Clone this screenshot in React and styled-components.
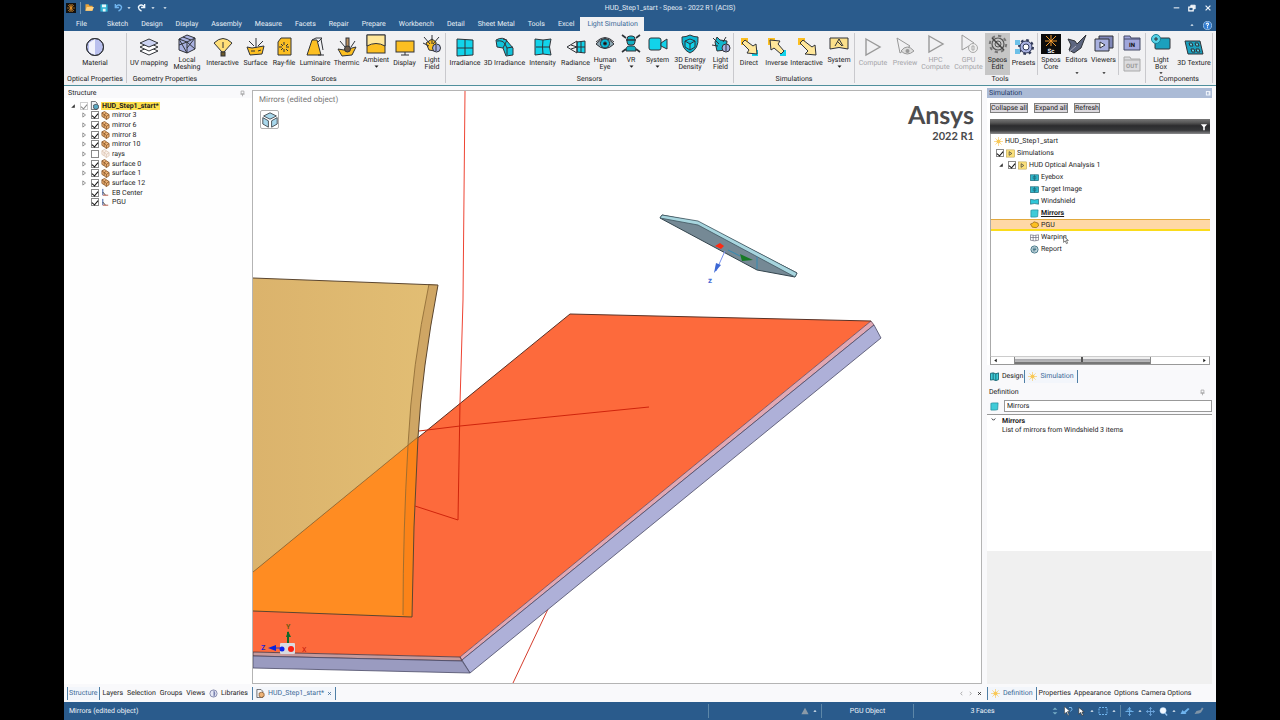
import { Fragment, useState } from 'react'
import styled, { createGlobalStyle, css } from 'styled-components'


const GlobalStyle = createGlobalStyle`
    :root {
        --blue: #2a5b8c;
        --ribbon: #f1f1f3;
        --line: #c9c9cd;
        --steel: #4f7fa6;
    }
    * { box-sizing: border-box; }
    body {
        margin: 0;
        background: #000;
    }
    button, input {
        font: inherit;
        color: inherit;
        text-rendering: inherit;
    }
    ul { list-style: none; margin: 0; padding: 0; }
    svg { display: block; flex: none; }
`

const Page = styled.div`
    min-height: 100vh;
    margin: 0 64px;
    display: flex;
    flex-direction: column;
    background: #f9f9fb;
    color: #1c1c1c;
    font: 7px/8px Roboto, "Liberation Sans", sans-serif;
    text-rendering: geometricPrecision;
    white-space: nowrap;
`

const Spacer = styled.div`
    flex: 1;
`

/* ---------- title bar and menu ---------- */

const TitleBar = styled.header`
    display: grid;
    grid-template-columns: 1fr auto 1fr;
    align-items: center;
    height: 15px;
    padding: 0 4px 0 2px;
    background: var(--blue);
    color: #e4ecf4;
`

const Title = styled.h1`
    margin: 0;
    padding-left: 62px;
    font-size: 7px;
    font-weight: 400;
`

const Tools = styled.div`
    display: flex;
    align-items: center;
    gap: ${p => p.$gap || 4}px;
    justify-content: ${p => (p.$end ? 'flex-end' : 'flex-start')};
    height: 12px;
    color: #eef4fa;
`

const ToolButton = styled.button`
    display: flex;
    align-items: center;
    justify-content: center;
    border: none;
    background: none;
    padding: 0;
    min-width: ${p => p.$w || 6}px;
`

const Menu = styled.nav`
    display: flex;
    align-items: flex-end;
    height: 16px;
    padding: 0 4px 0 5px;
    background: var(--blue);
`

const MenuItem = styled.button`
    height: 14px;
    padding: 0 6px 0 7px;
    border: none;
    background: ${p => (p.$active ? 'var(--ribbon)' : 'none')};
    color: ${p => (p.$active ? '#3a6a98' : '#e9f0f7')};
    &:first-child {
        margin-right: 7px;
    }
`

/* ---------- ribbon ---------- */

const Ribbon = styled.div`
    display: flex;
    height: 55px;
    padding-top: 2px;
    background: var(--ribbon);
    border-bottom: 1px solid #4f8f9c;
    overflow: hidden;
`

const Group = styled.section`
    display: flex;
    flex-direction: column;
    flex: none;
    height: 50px;
    border-right: ${p => (p.$open ? 'none' : '1px solid var(--line)')};
`

const GroupRow = styled.div`
    display: flex;
    height: 42px;
`

const GroupName = styled.div`
    text-align: center;
    line-height: 8px;
`

const RibbonButton = styled.button`
    display: flex;
    flex-direction: column;
    align-items: center;
    width: ${p => p.$w}px;
    height: 42px;
    padding: ${p => (p.$tall ? 1 : 4)}px 0 0;
    border: none;
    background: ${p => (p.$on ? '#c6c6c6' : 'none')};
    color: ${p => (p.$off ? '#a4a4a8' : 'inherit')};
    line-height: 7px;
    span {
        margin-top: 3px;
    }
`

const Stack = styled.div`
    display: flex;
    flex-direction: column;
    align-items: center;
    gap: 4px;
    width: 26px;
    padding-top: 1px;
`

const Divider = styled.div`
    width: 1px;
    align-self: stretch;
    background: ${p => p.$tone || 'var(--line)'};
`

/* ---------- work area ---------- */

const Work = styled.main`
    flex: 1;
    display: flex;
    padding-top: 2px;
`

const Side = styled.aside`
    display: flex;
    flex-direction: column;
    flex: none;
    width: ${p => p.$w}px;
    ${p => p.$right && css`
        padding: 0 4px 0 5px;
    `}
`

const PanelTitle = styled.h2`
    display: flex;
    align-items: center;
    justify-content: space-between;
    height: 10px;
    margin: 0 ${p => (p.$lit ? 0 : 2)}px 0 0;
    padding: 0 ${p => (p.$lit ? 0 : 4)}px 0 ${p => (p.$right ? 2 : 4)}px;
    font-size: 7px;
    font-weight: 400;
    color: ${p => (p.$lit ? '#1f3a66' : 'inherit')};
    background: ${p => (p.$lit ? '#abbbd6' : 'none')};
`

const StructureBody = styled.div`
    flex: 1;
    padding: 3px 0 0 6px;
    background: #fefefe;
`

const StructureTree = styled.ul`
    display: grid;
    grid-auto-rows: 1fr;
    height: 106px;
`

const Node = styled.li`
    display: flex;
    align-items: center;
    gap: 2px;
    padding-left: ${p => p.$indent}px;
    label {
        display: flex;
        align-items: center;
        gap: 2px;
    }
    b {
        display: block;
        padding: 0 1px;
        background: #ffe14d;
        line-height: 8px;
    }
`

const Twist = styled.button`
    display: flex;
    width: 8px;
    padding: 0;
    border: none;
    background: none;
`

const Tick = styled.input`
    appearance: none;
    display: flex;
    justify-content: center;
    width: 8px;
    height: 8px;
    margin: 0;
    border: 1px solid ${p => (p.$faint ? '#d0d0d0' : '#8a8a8a')};
    background: #fff;
    &:checked::before {
        content: "";
        width: 3px;
        height: 5px;
        border: solid ${p => (p.$faint ? '#888' : '#111')};
        border-width: 0 1px 1px 0;
        transform: rotate(40deg);
    }
`

const TabStrip = styled.nav`
    display: flex;
    align-items: center;
    gap: ${p => p.$gap || 0}px;
    height: ${p => p.$h || 18}px;
    padding: 1px 0 1px ${p => p.$pad || 0}px;
`

const Tab = styled.button`
    display: flex;
    align-items: center;
    gap: 3px;
    height: 13px;
    padding: 0 ${p => (p.$wide ? 3 : 1)}px;
    border: none;
    background: none;
    ${p => p.$on && css`
        color: #3c6a98;
        border: solid var(--steel);
        border-width: 0 1px;
        background: #f3f6fb;
    `}
`

const Centre = styled.section`
    flex: 1;
    min-width: 0;
    display: flex;
    flex-direction: column;
    padding-top: 2px;
`

const Viewport = styled.div`
    position: relative;
    flex: 1;
    border: 1px solid #b4b4b4;
    background: #fff;
    overflow: hidden;
`

const Scene = styled.svg`
    position: absolute;
    inset: 0;
    width: 100%;
    height: 100%;
`

const ViewLabel = styled.div`
    position: absolute;
    top: 4px;
    left: 6px;
    color: #777;
    font-size: 8px;
    line-height: 9px;
`

const ViewButton = styled.button`
    position: absolute;
    top: 19px;
    left: 7px;
    display: flex;
    width: 19px;
    height: 19px;
    padding: 1px;
    align-items: center;
    justify-content: center;
    background: #fff;
    border: 1px solid #b0b0b0;
    border-radius: 2px;
`

const Brand = styled.div`
    position: absolute;
    top: 9px;
    right: 7px;
    text-align: right;
    color: #4b4b4d;
    font: 700 25px/30px Lato, sans-serif;
    small {
        display: block;
        font-size: 11px;
        line-height: 13px;
    }
`

/* ---------- simulation and definition ---------- */

const SimPanel = styled.div`
    display: flex;
    flex-direction: column;
    height: 267px;
    margin-right: 2px;
    padding-left: 3px;
    background: #fff;
`

const Actions = styled.div`
    display: flex;
    gap: 6px;
    padding: 5px 0 6px;
    button {
        height: 10px;
        padding: 0;
        border: 1px solid #808080;
        background: #dcd9de;
        line-height: 8px;
    }
`

const FilterBar = styled.div`
    display: flex;
    align-items: center;
    justify-content: flex-end;
    height: 15px;
    padding-right: 2px;
    background: linear-gradient(#777 0, #555 25%, #2c2c2e 45%, #37383a 75%, #8b8b8d 100%);
`

const SimTree = styled.ul`
    flex: 1;
    border-left: 1px solid #aaa;
    padding-top: 1px;
`

const SimNode = styled(Node)`
    height: 12px;
    ${p => p.$hot && css`
        background: #ffd8a6;
        border-top: 1px solid #e2a93d;
        border-bottom: 2px solid #fbdc1c;
    `}
    u { font-weight: 700; }
`

const ScrollTrack = styled.div`
    display: flex;
    align-items: center;
    height: 9px;
    padding: 0 2px;
    border: 1px solid #999;
    border-top-color: #ccc;
`

const Thumb = styled.div`
    display: flex;
    justify-content: center;
    width: 64%;
    height: 7px;
    margin: 0 auto 0 16px;
    border: 1px solid #888;
    border-width: 0 1px;
    background: linear-gradient(#eee 30%, #a9a9ad 30%, #bbb 75%, #777 76%);
    &::before {
        content: "";
        width: 2px;
        height: 5px;
        background: #555;
    }
`

const NameRow = styled.label`
    display: flex;
    align-items: center;
    gap: 5px;
    height: 17px;
    padding: 1px 0 0 3px;
`

const NameInput = styled.input`
    flex: 1;
    min-width: 0;
    height: 12px;
    padding: 0 2px;
    border: 1px solid #999;
    background: #fff;
`

const Details = styled.div`
    height: 137px;
    padding: 2px 0 0 4px;
    border-top: 1px solid #999;
    background: #fff;
    display: grid;
    grid-template-columns: 11px 1fr;
    grid-auto-rows: 9px;
    align-content: start;
    p, h3 {
        margin: 0;
        grid-column: 2;
        font-size: 7px;
    }
    h3 { line-height: 8px; }
`

const Blank = styled.div`
    flex: 1;
    background: #f0f0f0;
`

const Pointer = styled.svg`
    position: absolute;
    top: 2px;
    right: -3px;
`

const Hovered = styled.span`
    position: relative;
`

/* ---------- status bar ---------- */

const Status = styled.footer`
    display: flex;
    align-items: center;
    height: 18px;
    padding: 0 12px 0 5px;
    background: var(--blue);
    color: #eef4fa;
`

const StatusCell = styled.div`
    display: flex;
    align-items: center;
    justify-content: ${p => (p.$end ? 'flex-end' : 'center')};
    gap: 4px;
    width: ${p => p.$w}px;
    height: 14px;
    padding-right: ${p => (p.$end ? 4 : 0)}px;
    border-left: 1px solid #5d87a8;
`

/* ---------- drawings ---------- */

const art = {
    material: <><circle cx="10" cy="10" r="8.5" fill="#b9c0ee" /><path d="M4 15V6l6-4v16z" fill="#fff" stroke="none" opacity=".8" /><circle cx="10" cy="10" r="8.5" fill="none" /></>,
    uv: <><path d="M1 14l9-4 9 4-9 4z" fill="#fff" /><path d="M1 10l9-4 9 4-9 4z" fill="#fff" /><path d="M1 6l9-4 9 4-9 4z" fill="#ccd3f2" /></>,
    mesh: <><path d="M2 5l8-4 8 3v11l-8 4-8-3z" fill="#a9b1e0" /><path d="M2 5l8 3 8-4M10 8v11M2 5l8 14M10 8l8 7M2 11l8-3M10 14l8-10M6 3l8 3" fill="none" /></>,
    interactive: <><path d="M1 6q9-9 18 0l-8 9H9z" fill="#ffdf78" /><path d="M10 5v6" /><rect x="8" y="15" width="4" height="4" fill="#6d5a2b" /></>,
    surface: <><path d="M1 10l5 1 12-2-2 8-12 1z" fill="#fcbf22" /><path d="M3 4l5 5M10 1v10M17 4l-5 5M5 14h4M12 14l3-1" /></>,
    rayfile: <><path d="M7 1h10v17H4V5z" fill="#fcbf22" /><path d="M10 5v3M10 12v3M5 10h3M12 10h3M7 7l2 2M12 12l2 2M14 7l-2 2M7 13l2-2" /></>,
    luminaire: <><path d="M7 3h5l4 15H2z" fill="#fcbf22" /><path d="M7 3l4-2h6l-4 4M16 2l2 11M13 18h6" fill="none" /></>,
    thermic: <><path d="M1 12l6 1 12-3-4 8-10 1z" fill="#fcbf22" /><path d="M3 4l5 6M18 4l-4 6" /><rect x="9" y="1" width="3" height="11" fill="#b98f5f" /><circle cx="10.5" cy="12" r="3" fill="#6b5a4a" /></>,
    ambient: <><rect x="1" y="1" width="18" height="18" fill="#fcbf22" /><path d="M1 1h18v11q-9-5-18 0z" fill="#ffe79a" /></>,
    display: <><rect x="1" y="4" width="18" height="11" fill="#fcbf22" /><path d="M10 15v3M6 18h8" /></>,
    field: <><path d="M4 9l3 7 6 1 1-9-4-3z" fill="#fcbf22" /><path d="M2 3l6 7M10 1v9M17 3l-6 7M1 9l6 3" /><circle cx="14.5" cy="14" r="4" fill="#a9b1e0" /><path d="M14 11v6" /></>,
    irradiance: <><path d="M2 2l16 1v15l-16 1z" fill="#12d3ea" /><path d="M10 2v17M2 11h16" /></>,
    irradiance3d: <><path d="M1 3q7-4 11 1l6 7v7l-7 1-3-8-6-1z" fill="#12c3da" /><path d="M2 4q6-1 8 3l2 4 6-1M8 2l4 1-4 8M12 11v7" fill="none" /></>,
    intensity: <><path d="M2 2q8 2 16 0-3 8 0 16-8-2-16 0z" fill="#12d3ea" /><path d="M10 3q-1 7 0 14M3 10h14" fill="none" /></>,
    radiance: <><path d="M11 5l8-1v12l-8-1z" fill="#12d3ea" /><path d="M11 10h8M15 4v12M11 4L1 10l10 6zM5 8l6 2-6 2" fill="none" /></>,
    eye: <><path d="M1 10q9-11 18 0-9 9-18 0z" fill="#8fa8b4" /><circle cx="10" cy="9.5" r="4.5" fill="#0cb6d3" /><circle cx="10" cy="9.5" r="1.5" fill="#111" /><path d="M1 8q9-9 18 0" fill="none" /></>,
    vr: <><path d="M5 17q0-5 3-5h4q3 0 3 5z" fill="#12b0c4" /><rect x="6" y="2" width="8" height="9" rx="3" fill="#12b0c4" /><path d="M5 6h10M1 1l4 3M19 1l-4 3M1 18l4-3M19 18l-4-3" strokeWidth="1.6" /></>,
    camera: <><rect x="1" y="4" width="12" height="12" rx="2" fill="#12d3ea" /><path d="M13 9l6-4v10l-6-3z" fill="#12d3ea" /></>,
    density: <><path d="M10 1q4 2 8 2 1 12-8 16Q1 15 2 3q4 0 8-2z" fill="#0cb6d3" /><path d="M5 7l5-2 5 2v6l-5 3-5-3zM5 7l5 3 5-3M10 10v6" fill="#12d3ea" /></>,
    sensorfield: <><path d="M4 8l2-5 3 3 7 1-1 9-9 1z" fill="#12b6cc" /><path d="M2 4l6 6M15 3l-3 5M1 11l6 1" /><circle cx="15" cy="14" r="4" fill="#a9b1e0" /><path d="M15 11v6" /></>,
    direct: <><rect x="2" y="1" width="7" height="7" fill="#fcbf22" stroke="none" /><rect x="13" y="13" width="6" height="6" fill="#12d3ea" stroke="none" /><path d="M3 6l3-3 8 6 3-2 1 10-10-1 2-3z" fill="#ffe79a" /></>,
    inverse: <><rect x="1" y="1" width="7" height="7" fill="#fcbf22" stroke="none" /><rect x="13" y="13" width="6" height="6" fill="#12d3ea" stroke="none" /><path d="M17 14l-3 3-7-6-3 2L3 3l10 1-2 3z" fill="#ffe79a" /></>,
    simulate: <><rect x="1" y="1" width="7" height="7" fill="#fcbf22" stroke="none" /><path d="M3 6l3-3 9 7 3-2 1 10-11-1 3-3z" fill="#ffe79a" /></>,
    system: <><path d="M1 4h18v11q-9-3-18 0z" fill="#fbe08a" /><path d="M6 12l4-7 4 7M9 8l4 4" fill="none" /></>,
    play: <path d="M3 2l14 8-14 8z" fill="none" stroke="#999" strokeWidth="1.4" />,
    preview: <><path d="M2 1l13 8-10 7z" fill="none" stroke="#999" /><path d="M6 14q6-8 13 0-7 6-13 0z" fill="#ddd" stroke="#999" /><circle cx="12.5" cy="14" r="2" fill="#999" stroke="none" /></>,
    gpu: <><path d="M3 1l12 8-12 7z" fill="none" stroke="#999" /><circle cx="14" cy="14" r="4.5" fill="#eee" stroke="#aaa" /><path d="M13 12h2v4h-2z" fill="none" stroke="#aaa" /></>,
    edit: <><circle cx="10" cy="10" r="6" fill="none" strokeWidth="1.2" stroke="#555" /><circle cx="10" cy="10" r="8.2" fill="none" strokeDasharray="3.3 3.1" strokeWidth="2" stroke="#777" /><circle cx="10" cy="10" r="3" fill="none" stroke="#555" /><path d="M4 4l12 12" strokeWidth="1.4" stroke="#444" /></>,
    gear: <><circle cx="12" cy="10" r="6" fill="#a9b1e0" stroke="#303858" /><circle cx="12" cy="10" r="7" fill="none" stroke="#303858" strokeDasharray="2.7 2.8" strokeWidth="2" /><circle cx="12" cy="10" r="3" fill="#fff" stroke="#303858" /><path d="M1 3h5v5H1zM1 12h5v5H1z" fill="#6cc0e8" stroke="none" /></>,
    editors: <><path d="M1 5l7 2 2 3 9-9-5 13-7 5-5-3 2-5z" fill="#5d6680" /><path d="M2 18l7-6" stroke="#aab" /></>,
    viewers: <><path d="M5 2h14v12H5z" fill="#8087b8" /><path d="M1 5h14v12H1z" fill="#a9b1e0" /><path d="M6 8l5 3-5 3z" fill="#fff" /></>,
    box: <><rect x="4" y="4" width="15" height="11" rx="1" fill="#1ba0bd" /><circle cx="5" cy="5" r="4.5" fill="#58d2e6" stroke="#187f96" /><path d="M5 3v4M3 5h4" /></>,
    texture: <><path d="M1 4h15l3 13H4z" fill="#1ba0bd" /><path d="M5 6h3l1 3H6zM11 6h3l1 3h-3zM7 12h3l1 3H8zM12 12h3l1 3h-3z" fill="#58d2e6" /></>,
    part: <><path d="M2 4l6-3 4 3 6 4v7l-6 4-5-4-5-3z" fill="#eeb478" stroke="#7a4a1e" strokeWidth="1.6" /><path d="M2 4l5 4v7M7 8l5-3M12 12l6-4M12 12v7M7 8l5 4" fill="none" stroke="#7a4a1e" strokeWidth="1.6" /></>,
    partOff: <path d="M2 4l6-3 4 3 6 4v7l-6 4-5-4-5-3zM2 4l5 4v7M7 8l5-3M12 12l6-4M12 12v7M7 8l5 4" fill="#faf0e8" stroke="#d9c2b0" strokeWidth="1.6" />,
    root: <><path d="M3 1h9l4 4v14H3z" fill="#eef3f8" strokeWidth="1.5" /><path d="M8 9l6-2 5 3v6l-6 3-5-3z" fill="#58a8c4" strokeWidth="1.5" /></>,
    doc: <><path d="M2 1h9l4 4v14H2z" fill="#f4f4f6" strokeWidth="1.5" /><path d="M7 9l6-2 5 3v6l-6 3-5-3z" fill="#eeb478" stroke="#7a4a1e" strokeWidth="1.5" /></>,
    axis: <><path d="M4 2v14" stroke="#2b4f9c" strokeWidth="2" /><path d="M4 9l6 7" stroke="#333" strokeWidth="2" /><path d="M4 16h12" stroke="#b05040" strokeWidth="2" /></>,
    cube: <><path d="M10 1l8 4-8 4-8-4z" fill="#a9d8ec" /><path d="M1 7l7 4v8l-7-4zM19 7l-7 4v8l7-4z" fill="#a9d8ec" /></>,
    sun: <><circle cx="10" cy="10" r="4.5" fill="#fccf52" stroke="none" /><path d="M10 0v20M0 10h20M3 3l14 14M17 3L3 17" stroke="#f7c65a" strokeWidth="1.4" /></>,
    tealBox: <><rect x="1" y="4" width="18" height="13" fill="#2fb7cb" stroke="#1c6675" strokeWidth="1.5" /><path d="M7 8h6v5H7zM10 4v13" fill="none" stroke="#1c6675" strokeWidth="1.5" /></>,
    tealTab: <path d="M1 5q9 3 18 0v11q-9-3-18 0z" fill="#2fc7d8" stroke="#1c6675" strokeWidth="1.5" />,
    tealSheet: <path d="M2 3l4-1h12l-1 15-5 1H2z" fill="#3fcbd8" stroke="#1b8796" strokeWidth="1.5" />,
    yellowBox: <><rect x="1" y="2" width="18" height="16" fill="#fbe07a" stroke="#a58a30" /><path d="M7 6l6 4-6 4z" fill="none" strokeWidth="1.5" /></>,
    pgu: <path d="M1 9l5-2 3-3 9 3 1 6-5 4-9-1z" fill="#fcbf22" stroke="#8a5a10" strokeWidth="1.5" />,
    warp: <path d="M1 4q9 3 18 0v12q-9 3-18 0zM7 5v12M13 5v12M1 10h18" fill="none" stroke="#667" strokeWidth="1.5" />,
    report: <><circle cx="10" cy="10" r="8" fill="#c9dbe2" stroke="#3d6f80" strokeWidth="2" /><path d="M6 7h8M6 10h8M6 13h6" stroke="#3d6f80" strokeWidth="2" /></>,
    map: <><path d="M1 3l6-1 6 2 6-2v15l-6 2-6-2-6 1z" fill="#3fcbd8" stroke="#14616e" strokeWidth="2" /><path d="M7 2v15M13 4v15" stroke="#14616e" strokeWidth="2" /></>,
    globe: <><circle cx="10" cy="10" r="8" fill="#e5e8f5" strokeWidth="1.5" stroke="#5c6390" /><path d="M10 2q8 8 0 16z" fill="#7880b0" stroke="none" /></>,
    pin: <path d="M6 3h8v8H6zM4 12h12M10 12v6" fill="none" stroke="#999" strokeWidth="2" />,
    pinLit: <path d="M4 4h10v10H4zM12 4v10" fill="none" stroke="#eef3fa" strokeWidth="3" />,
    filter: <path d="M2 3h16l-6 7v8h-4v-8z" fill="#fff" stroke="none" />,
    right: <path d="M6 3l9 7-9 7z" fill="#fff" stroke="#555" strokeWidth="2" />,
    open: <path d="M16 4v12H4z" fill="#333" stroke="none" />,
    down: <path d="M2 6h16l-8 9z" fill="currentColor" stroke="none" />,
    up: <path d="M2 14h16L10 5z" fill="currentColor" stroke="none" />,
    prompt: <path d="M1 18h18L10 2z" fill="#8b9aa8" stroke="none" />,
    prev: <path d="M15 3L5 10l10 7z" fill="currentColor" stroke="none" />,
    next: <path d="M5 3l10 7-10 7z" fill="currentColor" stroke="none" />,
    chevL: <path d="M13 3l-6 7 6 7" fill="none" strokeWidth="2" stroke="#666" />,
    chevR: <path d="M7 3l6 7-6 7" fill="none" strokeWidth="2" stroke="#666" />,
    chevD: <path d="M3 6l7 7 7-7" fill="none" strokeWidth="4" />,
    close: <path d="M4 4l12 12M16 4L4 16" fill="none" stroke="currentColor" strokeWidth="3" />,
    minus: <path d="M2 11h16" stroke="currentColor" strokeWidth="3" />,
    restore: <><path d="M7 3h11v9H7z" fill="#dfe8f1" stroke="#fff" strokeWidth="2" /><path d="M2 8h11v9H2z" fill="#2a5b8c" stroke="#fff" strokeWidth="3" /></>,
    help: <><circle cx="10" cy="10" r="9" fill="#2d7ad0" stroke="#9fc4ea" strokeWidth="2" /><path d="M7 8q0-4 4-3 3 2-1 5v2M10 14v2" fill="none" stroke="#fff" strokeWidth="2.5" /></>,
    folder: <><path d="M1 3h7l2 3h7v11H1z" fill="#e9a33a" stroke="none" /><path d="M4 9h16l-4 8H1z" fill="#ffd282" stroke="none" /></>,
    save: <><path d="M1 1h18v18H1z" fill="#2eb3d4" stroke="none" /><path d="M5 1h10v7H5zM7 12h7v7H7z" fill="#e6f5fa" stroke="none" /></>,
    undo: <path d="M3 2v8h8M3 9q7-8 13-2 3 6-6 11" fill="none" stroke="#6fb4ee" strokeWidth="3" />,
    redo: <path d="M17 2v8H9M17 9Q10 1 4 7q-3 6 6 11" fill="none" stroke="#eef6fd" strokeWidth="3" />,
    spark: <><rect width="20" height="20" fill="#111" stroke="none" /><path d="M10 2v16M2 10h16M4 4l12 12M16 4L4 16M7 2l6 16M13 2L7 18" stroke="#f29a2e" strokeWidth="1.2" /></>,
    updown: <><path d="M10 1l6 6H4z" fill="#77adc7" stroke="none" /><path d="M10 19l6-6H4z" fill="#77adc7" stroke="none" /></>,
    cursor: <path d="M4 1v15l4-4 3 7 3-1-3-7h5z" fill="#fff" stroke="#333" strokeWidth="1.5" />,
    cursor2: <><path d="M3 1v15l4-4 3 7 2-1-3-7h5z" fill="#fff" stroke="#333" /><path d="M12 3q7-2 6 4l-3 4" fill="none" stroke="#78b8ec" strokeWidth="2" /></>,
    marquee: <rect x="2" y="3" width="16" height="14" fill="none" stroke="#6fb4ee" strokeWidth="2" strokeDasharray="4 2" />,
    orbit: <path d="M10 1v18M1 10h18M7 4l3-3 3 3M7 16l3 3 3-3M4 7q7-4 12 3" fill="none" stroke="#6fb4ee" strokeWidth="2" />,
    pan: <path d="M10 1v18M1 10h18M7 4l3-3 3 3M7 16l3 3 3-3M4 7l-3 3 3 3M16 7l3 3-3 3" fill="none" stroke="#6fa8e0" strokeWidth="2" />,
    zoom: <><circle cx="9" cy="8" r="7" fill="#f2f8ff" stroke="#a8cdf0" /><path d="M13 13l5 6" stroke="#8fc0ee" strokeWidth="3" /></>,
    swing: <path d="M1 16l4-8 3 3 8-7 3 2-8 8 2 2z" fill="#6fb4ee" stroke="none" />,
    swingOff: <path d="M1 16l4-6 8-2 3-5 3 2-5 8-4 2z" fill="#8095a8" stroke="none" />,
}

const Icon = ({ name, size = 20 }) => (
    <svg width={size} height={size} viewBox="0 0 20 20" stroke="#303338" strokeWidth="1" aria-hidden="true">
        {art[name]}
    </svg>
)

const CoreIcon = () => (
    <svg width="20" height="20" viewBox="0 0 20 20" aria-hidden="true">
        <rect width="20" height="20" fill="#0c0c0c" />
        <path d="M10 1v11M4 7h12M5 2l10 10M15 2L5 12" stroke="#f29a2e" />
        <text x="10" y="19" fill="#fff" fontSize="6" fontWeight="700" textAnchor="middle">Sc</text>
    </svg>
)

const PortIcon = ({ text, off }) => (
    <svg width="18" height="17" viewBox="0 0 18 17" role="img" aria-label={text}>
        <path
            d="M1 2h6l1 2h9v12H1z"
            fill={off ? '#dcdcdf' : '#a0a6dc'}
            stroke={off ? '#aaa' : '#444a66'}
        />
        <path d="M1 5h16" stroke={off ? '#aaa' : '#444a66'} />
        <text x="9" y="13" fill={off ? '#999' : '#111'} fontSize="6" fontWeight="700" textAnchor="middle">{text}</text>
    </svg>
)

/* name, icon, width, options */
const groups = [
    { name: 'Optical Properties', items: [['Material', 'material', 62]] },
    {
        name: 'Geometry Properties', open: true,
        items: [['UV mapping', 'uv', 44], ['Local/Meshing', 'mesh', 32]],
    },
    {
        name: 'Sources',
        items: [
            ['Interactive', 'interactive', 39], ['Surface', 'surface', 27], ['Ray-file', 'rayfile', 30],
            ['Luminaire', 'luminaire', 32], ['Thermic', 'thermic', 31], ['Ambient', 'ambient', 28, 'menu'],
            ['Display', 'display', 29], ['Light/Field', 'field', 26],
        ],
    },
    {
        name: 'Sensors',
        items: [
            ['Irradiance', 'irradiance', 38], ['3D Irradiance', 'irradiance3d', 41], ['Intensity', 'intensity', 35],
            ['Radiance', 'radiance', 31], ['Human/Eye', 'eye', 28], ['VR', 'vr', 24, 'menu'],
            ['System', 'camera', 29, 'menu'], ['3D Energy/Density', 'density', 36], ['Light/Field', 'sensorfield', 25],
        ],
    },
    {
        name: 'Simulations',
        items: [
            ['Direct', 'direct', 30], ['Inverse', 'inverse', 25], ['Interactive', 'simulate', 35],
            ['System', 'system', 30, 'menu'],
        ],
    },
    {
        name: 'Tools',
        items: [
            ['Compute', 'play', 36, 'off'], ['Preview', 'preview', 28, 'off'], ['HPC/Compute', 'play', 33, 'off'],
            ['GPU/Compute', 'gpu', 33, 'off'], ['Speos/Edit', 'edit', 25, 'on'], ['Presets', 'gear', 27], null,
            ['Speos/Core', 'core', 26], ['Editors', 'editors', 25, 'menu gap'], ['Viewers', 'viewers', 29, 'menu gap'], null,
            'ports',
        ],
    },
    { name: 'Components', items: [['Light/Box', 'box', 30, 'menu'], ['3D Texture', 'texture', 36]] },
]

const RibbonItem = ({ item }) => {
    if (item === null) return <Divider />
    if (item === 'ports') {
        return (
            <Stack>
                <PortIcon text="IN" />
                <PortIcon text="OUT" off />
            </Stack>
        )
    }
    const [label, icon, width, flags = ''] = item
    const lines = label.split('/')
    const menu = flags.includes('menu')
    return (
        <RibbonButton
            $w={width}
            $tall={lines.length > 1 || menu}
            $on={flags === 'on'}
            $off={flags === 'off'}
        >
            {icon === 'core' ? <CoreIcon /> : <Icon name={icon} />}
            <span>
                {lines.map((line, i) => <Fragment key={line}>{i > 0 && <br />}{line}</Fragment>)}
                {flags.includes('gap') && <br />}
                {flags.includes('gap') && '\u00a0'}
            </span>
            {menu && <Icon name="down" size={lines.length > 1 || flags.includes('gap') ? 4 : 5} />}
        </RibbonButton>
    )
}

const menuItems = [
    'File', 'Sketch', 'Design', 'Display', 'Assembly', 'Measure', 'Facets', 'Repair', 'Prepare',
    'Workbench', 'Detail', 'Sheet Metal', 'Tools', 'Excel', 'Light Simulation',
]

const parts = [
    ['mirror 3', true], ['mirror 6', true], ['mirror 8', true], ['mirror 10', true], ['rays', false],
    ['surface 0', true], ['surface 1', true], ['surface 12', true],
]

const simItems = [
    ['Eyebox', 'tealBox'], ['Target Image', 'tealBox'], ['Windshield', 'tealTab'], ['Mirrors', 'tealSheet'],
    ['PGU', 'pgu'], ['Warping', 'warp'], ['Report', 'report'],
]

const Model = () => (
    <Scene viewBox="253 91 728 592" preserveAspectRatio="xMinYMin slice">
        <defs>
            <linearGradient id="sand" x1="0" x2="1">
                <stop offset="0" stopColor="#dbb36c" />
                <stop offset="1" stopColor="#e2be74" />
            </linearGradient>
        </defs>
        <path d="M548 609L513 683" stroke="#d43c2c" />
        <path d="M253 572L570 314l301 7-411 336-207-5z" fill="#fd6a3c" />
        <path d="M871 321l3 4-412 335-2-3z" fill="#e0a8b4" stroke="#54374a" strokeWidth=".7" />
        <path d="M874 325l7 13-411 335-8-13z" fill="#aeb0d8" stroke="#4a4a66" strokeWidth=".8" />
        <path d="M253 652l207 5 2 4-209-5z" fill="#c59a9c" stroke="#4b3038" strokeWidth=".8" />
        <path d="M253 656l209 5 8 12-217-5z" fill="#9a9bc0" stroke="#4a4a66" strokeWidth=".8" />
        <path d="M253 572L570 314l301 7" fill="none" stroke="#5a3226" />
        <path d="M253 278l185 7q-16 84-20 152L253 572z" fill="url(#sand)" />
        <path d="M429 284l9 1q-16 84-20 152l-10 8q4-80 21-161z" fill="#cfa664" />
        <path d="M253 572l165-135q-5 90-6 180l-159-6z" fill="#ff8c22" />
        <path d="M408 445l10-8q-5 90-6 180h-9q0-85 5-172z" fill="#fb8319" />
        <path d="M429 284q-17 81-21 161-5 87-5 170M253 572l165-135" fill="none" stroke="#8a6732" strokeWidth=".8" />
        <path d="M253 278l185 7q-16 84-20 152-5 90-6 180l-159-6" fill="none" stroke="#5b4630" />
        <path d="M465 91l-2 209-3 103" fill="none" stroke="#ee4433" />
        <path d="M460 403l-2 117-43-14M419 431l41-5 189-19" fill="none" stroke="#cf240c" />
        <path d="M660 218l2-3 36 7 99 51-2 4-38-7z" fill="#758995" stroke="#34454e" />
        <path d="M660 218l2-3 36 6 99 52-2 4-97-52z" fill="#a7d5de" stroke="#40565f" strokeWidth=".8" />
        <path d="M757 257v12M728 250l12 6" stroke="#328ab2" />
        <path d="M715 246l5-3 4 3-3 3z" fill="#ff2a12" />
        <path d="M740 254l13 6-11 1z" fill="#187a26" />
        <path d="M725 251l-9 20" stroke="#7890ec" />
        <path d="M714 273l2-10 5 2z" fill="#3d68d4" />
        <text x="708" y="283" fill="#4a6fd6" fontSize="8" fontWeight="700">z</text>
        <path d="M280 648h-8" stroke="#123ad8" />
        <path d="M288 644v-12" stroke="#11692a" strokeWidth="2" />
        <path d="M286 637l2-6 3 6z" fill="#11692a" />
        <path d="M268 648l8-3v6z" fill="#0b22dc" />
        <rect x="280" y="643" width="15" height="11" rx="1" fill="#d9dbe0" />
        <circle cx="282" cy="649" r="2.5" fill="#0b22ee" />
        <circle cx="291" cy="649" r="3" fill="#fa1f12" />
        <text x="286" y="629" fill="#6b5a12" fontSize="7" fontWeight="700">Y</text>
        <text x="261" y="650" fill="#1a24d8" fontSize="7" fontWeight="700">Z</text>
        <text x="302" y="652" fill="#c4160a" fontSize="7">X</text>
    </Scene>
)

const Check = ({ start, icon, faint, children }) => {
    const [checked, setChecked] = useState(start)
    return (
        <label>
            <Tick
                type="checkbox"
                checked={checked}
                $faint={faint}
                onChange={e => setChecked(e.target.checked)}
            />
            <Icon name={icon} size={9} />
            <span>{children}</span>
        </label>
    )
}

const App = () => {
    const [menu, setMenu] = useState('Light Simulation')
    const [name, setName] = useState('Mirrors')

    return (
        <Page>
            <GlobalStyle />
            <TitleBar>
                <Tools>
                    <ToolButton aria-label="Speos"><Icon name="spark" size={10} /></ToolButton>
                    <Divider $tone="#6f93b4" />
                    <ToolButton aria-label="Open"><Icon name="folder" size={9} /></ToolButton>
                    <ToolButton aria-label="Save" $w={12}><Icon name="save" size={8} /></ToolButton>
                    <ToolButton aria-label="Undo"><Icon name="undo" size={9} /></ToolButton>
                    <Icon name="down" size={4} />
                    <ToolButton aria-label="Redo" $w={12}><Icon name="redo" size={9} /></ToolButton>
                    <Icon name="down" size={4} />
                    <ToolButton aria-label="Customize" $w={12}><Icon name="down" size={4} /></ToolButton>
                </Tools>
                <Title>HUD_Step1_start - Speos - 2022 R1 (ACIS)</Title>
                <Tools $end $gap={8}>
                    <ToolButton aria-label="Minimize"><Icon name="minus" size={7} /></ToolButton>
                    <ToolButton aria-label="Restore"><Icon name="restore" size={8} /></ToolButton>
                    <ToolButton aria-label="Close"><Icon name="close" size={8} /></ToolButton>
                </Tools>
            </TitleBar>
            <Menu>
                {menuItems.map(item => (
                    <MenuItem key={item} $active={item === menu} onClick={() => setMenu(item)}>{item}</MenuItem>
                ))}
                <Spacer />
                <Tools $gap={8}>
                    <ToolButton aria-label="Collapse ribbon"><Icon name="up" size={4} /></ToolButton>
                    <ToolButton aria-label="Help"><Icon name="help" size={9} /></ToolButton>
                </Tools>
            </Menu>
            <Ribbon>
                {groups.map(group => (
                    <Group key={group.name} $open={group.open}>
                        <GroupRow>
                            {group.items.map((item, i) => <RibbonItem key={i} item={item} />)}
                        </GroupRow>
                        <GroupName>{group.name}</GroupName>
                    </Group>
                ))}
            </Ribbon>

            <Work>
                <Side $w={188}>
                    <PanelTitle>Structure<Icon name="pin" size={7} /></PanelTitle>
                    <StructureBody>
                        <StructureTree>
                            <Node $indent={0}>
                                <Twist aria-label="Collapse"><Icon name="open" size={6} /></Twist>
                                <Check start icon="root" faint><b>HUD_Step1_start*</b></Check>
                            </Node>
                            {parts.map(([label, on]) => (
                                <Node key={label} $indent={11}>
                                    <Twist aria-label="Expand"><Icon name="right" size={6} /></Twist>
                                    <Check start={on} icon={on ? 'part' : 'partOff'}>{label}</Check>
                                </Node>
                            ))}
                            <Node $indent={21}><Check start icon="axis">EB Center</Check></Node>
                            <Node $indent={21}><Check start icon="axis">PGU</Check></Node>
                        </StructureTree>
                    </StructureBody>
                    <TabStrip $gap={2} $pad={3}>
                        <Tab $on>Structure</Tab>
                        <Tab>Layers</Tab>
                        <Tab>Selection</Tab>
                        <Tab>Groups</Tab>
                        <Tab>Views</Tab>
                        <Tab><Icon name="globe" size={9} />Libraries</Tab>
                    </TabStrip>
                </Side>

                <Centre>
                    <Viewport>
                        <Model />
                        <ViewLabel>Mirrors (edited object)</ViewLabel>
                        <ViewButton aria-label="Home view"><Icon name="cube" size={16} /></ViewButton>
                        <Brand>Ansys<small>2022 R1</small></Brand>
                    </Viewport>
                    <TabStrip $gap={4}>
                        <Tab $on $wide><Icon name="doc" size={9} />HUD_Step1_start*<Icon name="close" size={5} /></Tab>
                        <Spacer />
                        <Icon name="chevL" size={5} />
                        <Icon name="chevR" size={5} />
                        <Icon name="close" size={5} />
                    </TabStrip>
                </Centre>

                <Side $w={234} $right>
                    <PanelTitle $lit $right>Simulation<Icon name="pinLit" size={7} /></PanelTitle>
                    <SimPanel>
                        <Actions>
                            <button>Collapse all</button>
                            <button>Expand all</button>
                            <button>Refresh</button>
                        </Actions>
                        <FilterBar><Icon name="filter" size={8} /></FilterBar>
                        <SimTree>
                            <SimNode $indent={3}><Icon name="sun" size={9} />HUD_Step1_start</SimNode>
                            <SimNode $indent={5}><Check start icon="yellowBox">Simulations</Check></SimNode>
                            <SimNode $indent={7}>
                                <Twist aria-label="Collapse"><Icon name="open" size={6} /></Twist>
                                <Check start icon="yellowBox">HUD Optical Analysis 1</Check>
                            </SimNode>
                            {simItems.map(([label, icon]) => (
                                <SimNode key={label} $indent={39} $hot={label === 'PGU'}>
                                    <Icon name={icon} size={9} />
                                    {label === 'Mirrors' && <u>{label}</u>}
                                    {label === 'Warping' && (
                                        <Hovered>
                                            {label}
                                            <Pointer width="8" height="10" viewBox="0 0 20 20">{art.cursor}</Pointer>
                                        </Hovered>
                                    )}
                                    {label !== 'Mirrors' && label !== 'Warping' && label}
                                </SimNode>
                            ))}
                        </SimTree>
                        <ScrollTrack>
                            <Icon name="prev" size={5} />
                            <Thumb />
                            <Icon name="next" size={5} />
                        </ScrollTrack>
                    </SimPanel>
                    <TabStrip $h={22} $pad={2}>
                        <Tab><Icon name="map" size={9} />Design</Tab>
                        <Tab $on $wide><Icon name="sun" size={9} />Simulation</Tab>
                    </TabStrip>
                    <PanelTitle $right>Definition<Icon name="pin" size={7} /></PanelTitle>
                    <NameRow aria-label="Name">
                        <Icon name="tealSheet" size={9} />
                        <NameInput value={name} onChange={e => setName(e.target.value)} />
                    </NameRow>
                    <Details>
                        <Icon name="chevD" size={5} />
                        <h3>Mirrors</h3>
                        <p>List of mirrors from Windshield 3 items</p>
                    </Details>
                    <Blank />
                    <TabStrip $gap={1}>
                        <Tab $on $wide><Icon name="sun" size={9} />Definition</Tab>
                        <Tab>Properties</Tab>
                        <Tab>Appearance</Tab>
                        <Tab>Options</Tab>
                        <Tab>Camera Options</Tab>
                    </TabStrip>
                </Side>
            </Work>

            <Status>
                Mirrors (edited object)
                <Spacer />
                <StatusCell $w={113} $end>
                    <Icon name="prompt" size={8} />
                    <Icon name="up" size={4} />
                </StatusCell>
                <StatusCell $w={92}>PGU Object</StatusCell>
                <StatusCell $w={138}>3 Faces</StatusCell>
                <Tools>
                    <ToolButton aria-label="Step"><Icon name="updown" size={8} /></ToolButton>
                    <ToolButton aria-label="Pick"><Icon name="cursor2" size={10} /></ToolButton>
                    <ToolButton aria-label="Select"><Icon name="cursor" size={9} /></ToolButton>
                    <Icon name="up" size={4} />
                    <ToolButton aria-label="Box select"><Icon name="marquee" size={10} /></ToolButton>
                    <Icon name="up" size={4} />
                    <Divider $tone="#5d87a8" />
                    <ToolButton aria-label="Orbit"><Icon name="orbit" size={9} /></ToolButton>
                    <Icon name="up" size={4} />
                    <ToolButton aria-label="Pan"><Icon name="pan" size={9} /></ToolButton>
                    <ToolButton aria-label="Zoom"><Icon name="zoom" size={9} /></ToolButton>
                    <Icon name="up" size={4} />
                    <ToolButton aria-label="Previous view"><Icon name="swing" size={10} /></ToolButton>
                    <ToolButton aria-label="Next view"><Icon name="swingOff" size={10} /></ToolButton>
                </Tools>
            </Status>
        </Page>
    )
}

export default App
